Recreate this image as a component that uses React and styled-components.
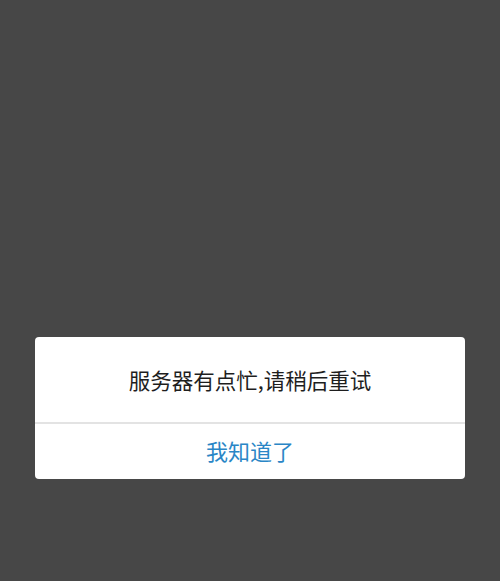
import styled, { createGlobalStyle } from "styled-components";

const GlobalStyle = createGlobalStyle`
  html, body {
    margin: 0;
    padding: 0;
    background: #474747;
  }
  body {
    font-family: "Noto Sans CJK SC", "Noto Sans", sans-serif;
  }
`;

const Screen = styled.div`
  width: 500px;
  height: 581px;
  display: flex;
  flex-direction: column;
  justify-content: flex-end;
  align-items: center;
  padding-bottom: 102px;
  box-sizing: border-box;
  background: #474747;
`;

const Dialog = styled.div`
  width: 430px;
  background: #ffffff;
  border-radius: 4px;
  display: flex;
  flex-direction: column;
  overflow: hidden;
`;

const Message = styled.div`
  height: 85px;
  display: flex;
  align-items: center;
  justify-content: center;
  font-size: 21.5px;
  color: #1e1e1e;
  padding-top: 0;
  box-sizing: border-box;
`;

const Divider = styled.div`
  height: 2px;
  background: #e3e3e3;
`;

const Action = styled.button`
  height: 55px;
  border: none;
  background: transparent;
  font-family: inherit;
  font-size: 22px;
  color: #2a86c6;
  display: flex;
  align-items: center;
  justify-content: center;
  padding: 0 0 4px;
  box-sizing: border-box;
  cursor: pointer;
`;

export default function App() {
  return (
    <>
      <GlobalStyle />
      <Screen>
        <Dialog>
          <Message>服务器有点忙,请稍后重试</Message>
          <Divider />
          <Action>我知道了</Action>
        </Dialog>
      </Screen>
    </>
  );
}
